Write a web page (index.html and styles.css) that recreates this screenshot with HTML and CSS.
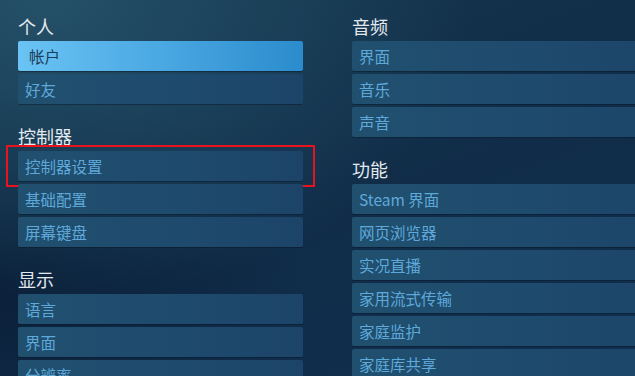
FILE: index.html
```html
<!DOCTYPE html>
<html lang="zh-CN">
<head>
<meta charset="utf-8">
<title>设置</title>
<link rel="stylesheet" href="styles.css">
</head>
<body>
<div class="page">
  <div class="col col-left">
    <section class="group">
      <h2 class="group-title">个人</h2>
      <div class="item active">帐户</div>
      <div class="item">好友</div>
    </section>
    <section class="group">
      <h2 class="group-title">控制器</h2>
      <div class="item marked">控制器设置<span class="highlight"></span></div>
      <div class="item">基础配置</div>
      <div class="item">屏幕键盘</div>
    </section>
    <section class="group">
      <h2 class="group-title">显示</h2>
      <div class="item">语言</div>
      <div class="item">界面</div>
      <div class="item">分辨率</div>
    </section>
  </div>
  <div class="col col-right">
    <section class="group">
      <h2 class="group-title">音频</h2>
      <div class="item">界面</div>
      <div class="item">音乐</div>
      <div class="item">声音</div>
    </section>
    <section class="group">
      <h2 class="group-title">功能</h2>
      <div class="item">Steam 界面</div>
      <div class="item">网页浏览器</div>
      <div class="item">实况直播</div>
      <div class="item">家用流式传输</div>
      <div class="item">家庭监护</div>
      <div class="item">家庭库共享</div>
    </section>
  </div>
</div>
</body>
</html>
```
FILE: styles.css
```css
html, body {
  margin: 0;
  padding: 0;
  width: 635px;
  height: 376px;
  overflow: hidden;
}
body {
  font-family: "Noto Sans CJK SC", "Noto Sans", sans-serif;
  background:
    radial-gradient(ellipse 420px 300px at 8% 0%, rgba(40, 88, 112, 0.75) 0%, rgba(40, 88, 112, 0) 100%),
    radial-gradient(ellipse 300px 200px at 0% 75%, rgba(8, 24, 48, 0.6) 0%, rgba(8, 24, 48, 0) 100%),
    linear-gradient(160deg, #16374f 0%, #102c48 55%, #102e4f 100%);
}
.page {
  display: grid;
  grid-template-columns: 285px 320px;
  column-gap: 49px;
  padding: 14px 0 0 18px;
}
.col {
  display: flex;
  flex-direction: column;
  gap: 20px;
}
.group {
  display: flex;
  flex-direction: column;
  gap: 3px;
}
.group-title {
  margin: 0;
  font-size: 18px;
  font-weight: normal;
  line-height: 24px;
  height: 24px;
  color: #e4e9ee;
}
.item {
  position: relative;
  height: 30px;
  line-height: 30px;
  padding-left: 7px;
  font-size: 15.5px;
  color: #5ea9da;
  border-radius: 2px;
  background: linear-gradient(to right, #21506f 0%, #1e4a6d 60%, #1c4468 100%);
  box-shadow: 0 1px 0 rgba(8, 22, 40, 0.45);
  white-space: nowrap;
}
.item.active {
  padding-left: 11px;
  color: #1c3c58;
  background: linear-gradient(to right, #6ac3f4 0%, #4aa8e2 50%, #2b8ccd 100%);
}
.highlight {
  position: absolute;
  top: -6px;
  bottom: -6px;
  left: -12px;
  right: -12px;
  border: 2px solid #e8131b;
  pointer-events: none;
}
```
